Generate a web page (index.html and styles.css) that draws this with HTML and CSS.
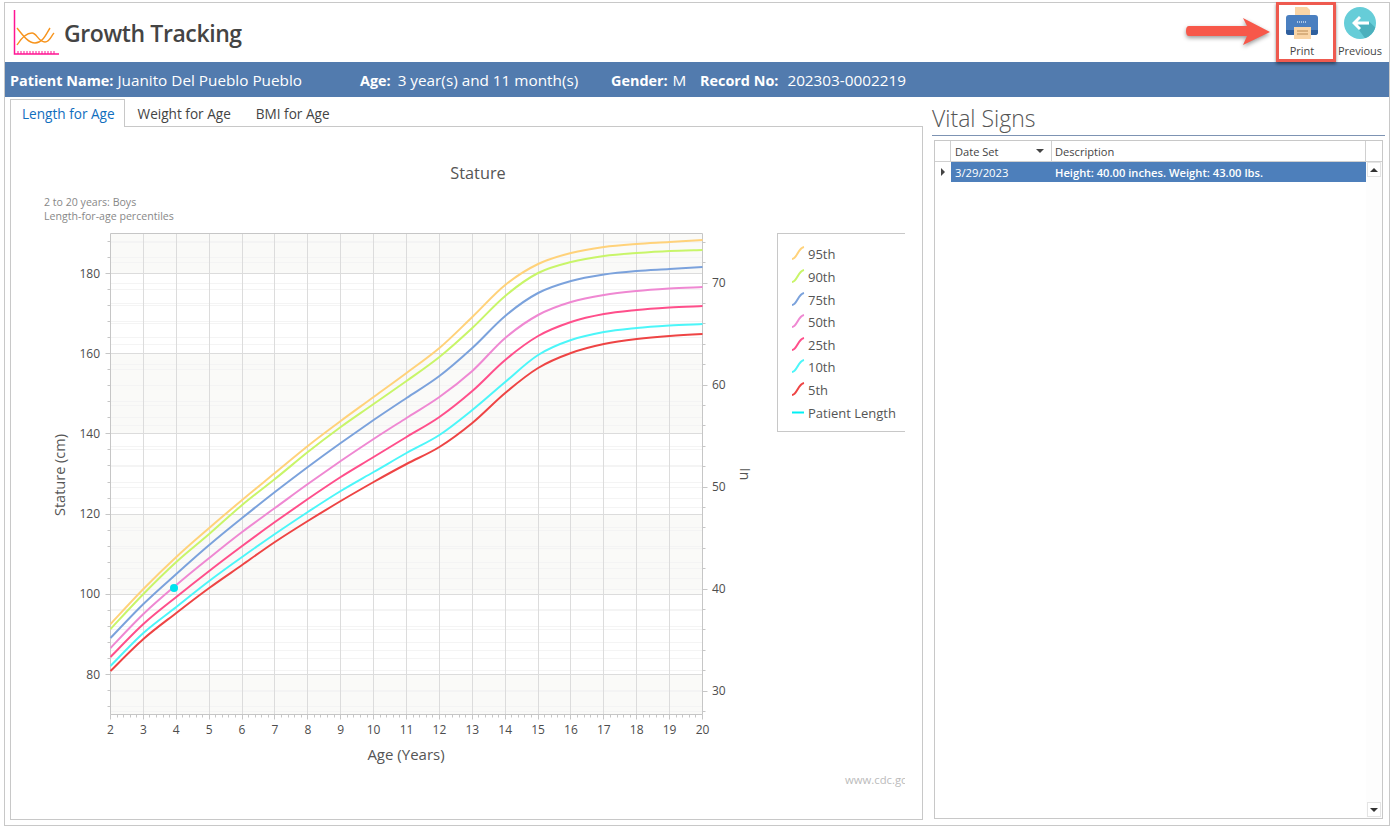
FILE: index.html
```html
<!DOCTYPE html>
<html lang="en">
<head>
<meta charset="utf-8">
<title>Growth Tracking</title>
<link rel="stylesheet" href="styles.css">
</head>
<body>
<div class="window">
  <header class="header">
    <svg class="logo" width="46" height="46" viewBox="13 10 46 46">
      <path class="logo-axis" d="M14.5 10V54H59"/>
      <path class="logo-ticks" d="M18 51v3M21 51v3M24 51v3M27 51v3M30 51v3M33 51v3M36 51v3M39 51v3M42 51v3M45 51v3M48 51v3M51 51v3M54 51v3"/>
      <path class="logo-curve" d="M17 28C24 37 29 43 35 43C43 43 46 34 50 28"/>
      <path class="logo-curve" d="M17 45C22 37 27 33 32 33C37 33 38 42 45 42C50 42 51 36 54 33"/>
    </svg>
    <h1 class="title">Growth Tracking</h1>
    <div class="actions">
      <button class="action action-print">
        <svg width="36" height="36" viewBox="1284 6 36 36">
          <path class="paper" d="M1295 7h12l3 3v9h-15z"/>
          <path class="printer" d="M1289 15h26q3 0 3 3v14q0 3-3 3h-26q-3 0-3-3V18q0-3 3-3z"/>
          <path class="printer-dark" d="M1286 30h32v2q0 3-3 3h-26q-3 0-3-3z"/>
          <path class="paper" d="M1294 27h17v12h-17z"/>
          <path class="paper-line" d="M1297 31h11M1297 34h11"/>
          <path class="printer-dots" d="M1297 22h10"/>
        </svg>
        <span>Print</span>
      </button>
      <button class="action action-prev">
        <svg width="34" height="34" viewBox="0 0 34 34">
          <circle class="prev-disc" cx="17" cy="17" r="16"/>
          <path class="prev-shadow" d="M16 24L18 22L14.500 18.500H26V15.500L32.300 21.500A16 16 0 0 1 22 32.200Z"/>
          <path class="prev-arrow" d="M9 17l7-7 2 2-3.500 3.500H26v3H14.500L18 22l-2 2z"/>
        </svg>
        <span>Previous</span>
      </button>
    </div>
    <div class="callout-box"></div>
    <svg class="callout-arrow" width="90" height="36" viewBox="0 0 90 36">
      <path d="M3 11H61L57 3L84 17L57 30L61 21H3Q0 21 0 16T3 11z"/>
    </svg>
  </header>

  <div class="patient-bar">
    <span class="field field-name"><b>Patient Name:</b> Juanito Del Pueblo Pueblo</span>
    <span class="field field-age"><b>Age:</b> 3 year(s) and 11 month(s)</span>
    <span class="field field-gender"><b>Gender:</b> M</span>
    <span class="field field-record"><b>Record No:</b> 202303-0002219</span>
  </div>

  <main class="content">
    <section class="chart-col">
      <nav class="tabs">
        <a class="tab tab-active">Length for Age</a>
        <a class="tab">Weight for Age</a>
        <a class="tab">BMI for Age</a>
      </nav>
      <div class="tab-panel">
        <svg id="chart" class="chart" width="894" height="692" viewBox="11 127 894 692">
          <g id="plot"></g>
          <text class="chart-title" x="478" y="178.500">Stature</text>
          <text class="chart-sub" x="44" y="206">2 to 20 years: Boys</text>
          <text class="chart-sub" x="44" y="220">Length-for-age percentiles</text>
          <text class="axis-title axis-title-age" x="406" y="760">Age (Years)</text>
          <text class="axis-title" transform="translate(65 475) rotate(-90)">Stature (cm)</text>
          <text class="axis-title-small" transform="translate(740 474) rotate(90)">In</text>
          <text class="watermark" x="845" y="784">www.cdc.gc</text>
          <g id="legend"></g>
        </svg>
      </div>
    </section>

    <aside class="vitals">
      <h2 class="vitals-title">Vital Signs</h2>
      <div class="grid">
        <div class="grid-head">
          <div class="cell cell-corner"></div>
          <div class="cell cell-date">Date Set<i class="sort"></i></div>
          <div class="cell cell-desc">Description</div>
          <div class="cell cell-end"></div>
        </div>
        <div class="grid-body">
          <div class="rows">
            <div class="row">
              <div class="row-marker"><i class="marker"></i></div>
              <div class="row-cell row-date">3/29/2023</div>
              <div class="row-cell row-desc">Height: 40.00 inches. Weight: 43.00 lbs.</div>
            </div>
          </div>
          <div class="scrollbar">
            <div class="scroll-btn"><i class="tri-up"></i></div>
            <div class="scroll-btn"><i class="tri-down"></i></div>
          </div>
        </div>
      </div>
    </aside>
  </main>
</div>
<script src="chart.js"></script>
</body>
</html>
```

FILE: styles.css
```css
* { box-sizing: border-box; }
html, body { margin: 0; padding: 0; background: #fff; }
body { font-family: "Open Sans", "Noto Sans", sans-serif; color: #444; overflow: hidden; }

.window {
  width: 1386px; height: 824px; margin: 2px 0 0 4px;
  border: 1px solid #c8c8c8; display: flex; flex-direction: column;
}

.header { position: relative; height: 59px; display: flex; align-items: center; flex: none; }
.logo { margin: 1px 0 0 8px; flex: none; }
.logo-axis { fill: none; stroke: #ff1493; stroke-width: 1.500; }
.logo-ticks { fill: none; stroke: #ff1493; stroke-width: 1; }
.logo-curve { fill: none; stroke: #f7941d; stroke-width: 1.400; }
.title { margin: 0 0 0 5px; font-size: 23px; letter-spacing: -0.4px; font-weight: 600; color: #444; line-height: 59px; position: relative; top: 1px; }

.actions { margin-left: auto; display: flex; align-items: flex-start; height: 100%; }
.action {
  border: 0; background: none; padding: 0; margin: 0; font: inherit; font-size: 11px; color: #444;
  display: flex; flex-direction: column; align-items: center; width: 58px;
}
.action span { line-height: 14px; }
.action-print { padding-top: 3px; }
.action-print span { margin-top: 2px; }
.action-prev { padding-top: 3px; }
.action-prev span { margin-top: 4px; }
.paper { fill: #f9d5a7; }
.paper-line { stroke: #b98a55; stroke-width: 1; fill: none; }
.printer { fill: #4a7fc0; }
.printer-dark { fill: #2f5f9e; }
.printer-dots { stroke: #cfe0f2; stroke-width: 1.500; stroke-dasharray: 1 1; fill: none; }
.prev-disc { fill: #66cdd8; }
.prev-shadow { fill: #4bb0bd; }
.prev-arrow { fill: #fff; }

.callout-box {
  position: absolute; left: 1271px; top: -1px; width: 60px; height: 60px;
  border: 3px solid #ee5a4f; box-shadow: 0 2px 3px rgba(0,0,0,.45);
}
.callout-arrow { position: absolute; left: 1181px; top: 12px; filter: drop-shadow(0 2px 2px rgba(0,0,0,.4)); }
.callout-arrow path { fill: #f7584a; }

.patient-bar {
  flex: none; height: 35px; background: #527bae; color: #fff;
  display: flex; align-items: center; font-size: 15.300px; padding: 1px 0 0 5px; white-space: nowrap;
}
.patient-bar b { font-weight: 700; font-size: 14.400px; }
.field-name { width: 350px; }
.field-age { width: 251px; }
.field-age b { margin-right: 3px; }
.field-gender { width: 89px; }
.field-gender b { margin-right: 1px; }
.field-record b { margin-right: 5px; }

.content { flex: 1; display: flex; min-height: 0; padding: 2px 0 0 5px; }
.chart-col { width: 913px; flex: none; display: flex; flex-direction: column; }
.tabs { display: flex; height: 27px; flex: none; position: relative; z-index: 1; font-size: 13.600px; }
.tab { height: 28px; line-height: 28px; padding: 0 12px; border: 1px solid transparent; border-bottom: 0; color: #444; white-space: nowrap; }
.tab + .tab + .tab { margin-left: -1px; }
.tab-active { color: #106ebe; border-color: #c8c8c8; background: #fff; padding: 0 9px 0 11px; }
.tab-panel { height: 694px; border: 1px solid #c8c8c8; flex: none; }
.chart { display: block; }

.chart-title { font-size: 16.300px; fill: #555; text-anchor: middle; }
.chart-sub { font-size: 10.600px; fill: #888; }
.axis-title { font-size: 14.500px; fill: #555; text-anchor: middle; }
.axis-title-age { font-size: 15px; }
.axis-title-small { font-size: 14px; fill: #555; text-anchor: middle; }
.watermark { font-size: 11.300px; fill: #bbb; }
.tick-label { font-size: 12px; fill: #4d4d4d; }
.legend-box { fill: #fff; stroke: #c8c8c8; }
.legend-label { font-size: 13px; fill: #555; }

.vitals { width: 453px; margin-left: 9px; flex: none; display: flex; flex-direction: column; }
.vitals-title {
  margin: 0; height: 37px; border-bottom: 1px solid #7d93b3; font-size: 23px; font-weight: 300; color: #555;
  line-height: 39px; white-space: nowrap; flex: none;
}
.grid { margin: 4px 0 0 2px; width: 449px; height: 679px; border: 1px solid #c8c8c8; display: flex; flex-direction: column; flex: none; }
.grid-head { display: flex; height: 21px; flex: none; font-size: 11.100px; border-bottom: 1px solid #d0d0d0; }
.cell { border-right: 1px solid #d0d0d0; line-height: 21px; color: #444; position: relative; white-space: nowrap; }
.cell-corner { width: 16px; }
.cell-date { width: 101px; padding-left: 4px; }
.cell-desc { width: 314px; padding-left: 3px; }
.cell-end { flex: 1; border-right: 0; }
.sort {
  position: absolute; right: 7px; top: 8px; border-left: 4px solid transparent; border-right: 4px solid transparent;
  border-top: 4px solid #444;
}
.grid-body { flex: 1; display: flex; min-height: 0; }
.rows { width: 431px; flex: none; }
.row { display: flex; height: 20px; }
.row-marker { width: 16px; flex: none; display: flex; align-items: center; justify-content: center; }
.marker { border-top: 4px solid transparent; border-bottom: 4px solid transparent; border-left: 4px solid #444; }
.row-cell { background: #4d7fbb; color: #fff; font-size: 11.200px; line-height: 21px; padding-left: 4px; white-space: nowrap; font-weight: 600; }
.row-date { width: 100px; font-weight: 400; font-size: 11.300px; }
.row-desc { width: 315px; }
.scrollbar { flex: 1; background: #fdfdfd; display: flex; flex-direction: column; justify-content: space-between; padding: 0 1px 1px 1px; }
.scroll-btn { height: 15px; background: #fff; border: 1px solid #e4e4e4; display: flex; align-items: center; justify-content: center; }
.tri-up { border-left: 4px solid transparent; border-right: 4px solid transparent; border-bottom: 4px solid #333; }
.tri-down { border-left: 4px solid transparent; border-right: 4px solid transparent; border-top: 4px solid #333; }

.band { fill: #fafaf8; }
.grid-major { stroke: #dcdcdc; stroke-width: 1; }
.grid-minor { stroke: #f4f4f4; stroke-width: 1; }
.axis-line { stroke: #c6c6c6; stroke-width: 1; fill: none; }
.curve { fill: none; stroke-width: 2; stroke-linejoin: round; }
.patient-dot { fill: #00e3ee; }
.legend-key { fill: none; stroke-width: 2; }
```

FILE: chart.js
```js
(function () {
  var NS = 'http://www.w3.org/2000/svg';
  var plot = document.getElementById('plot');
  var legend = document.getElementById('legend');

  function el(parent, name, attrs, text) {
    var e = document.createElementNS(NS, name);
    for (var k in attrs) e.setAttribute(k, attrs[k]);
    if (text !== undefined) e.textContent = text;
    parent.appendChild(e);
    return e;
  }
  function line(parent, cls, x1, y1, x2, y2) {
    el(parent, 'line', { 'class': cls, x1: x1, y1: y1, x2: x2, y2: y2 });
  }

  var L = 110.5, R = 702.5, T = 233.5, B = 714.5;
  function xAge(a) { return 110.5 + (a - 2) * 32.89; }
  function yCm(c) { return 273.5 + (180 - c) * 4.01; }
  function yIn(i) { return 283 + (70 - i) * 10.2; }
  function snap(v) { return Math.round(v - 0.5) + 0.5; }

  // alternating bands every 20 cm, from the top of the plot downwards
  [[T, snap(yCm(180))], [snap(yCm(160)), snap(yCm(140))], [snap(yCm(120)), snap(yCm(100))], [snap(yCm(80)), B]]
    .forEach(function (b) {
      el(plot, 'rect', { 'class': 'band', x: L, y: b[0], width: R - L, height: b[1] - b[0] });
    });

  // faint lines: 4 cm on the left scale, 2 in on the right scale
  var c, i, a;
  for (c = 72; c <= 188; c += 4) {
    if (c % 20 !== 0) line(plot, 'grid-minor', L, snap(yCm(c)), R, snap(yCm(c)));
  }
  for (i = 28; i <= 74; i += 2) {
    line(plot, 'grid-minor', L, snap(yIn(i)), R, snap(yIn(i)));
  }
  for (a = 3; a < 20; a++) line(plot, 'grid-major', snap(xAge(a)), T, snap(xAge(a)), B);
  for (c = 80; c <= 180; c += 20) line(plot, 'grid-major', L, snap(yCm(c)), R, snap(yCm(c)));

  // axes
  el(plot, 'path', { 'class': 'axis-line', d: 'M' + L + ' ' + T + 'H' + R + 'V' + B + 'H' + L + 'Z' });
  for (c = 72; c <= 188; c += 4) {
    var major = c % 20 === 0;
    line(plot, 'axis-line', major ? L - 5 : L - 3, snap(yCm(c)), L, snap(yCm(c)));
  }
  for (i = 28; i <= 74; i += 2) {
    var majorIn = i % 10 === 0;
    line(plot, 'axis-line', R, snap(yIn(i)), R + (majorIn ? 5 : 3), snap(yIn(i)));
  }
  for (a = 2; a <= 20.01; a += 0.2) {
    var whole = Math.abs(a - Math.round(a)) < 0.01;
    line(plot, 'axis-line', snap(xAge(a)), B, snap(xAge(a)), B + (whole ? 5 : 3));
  }

  // labels
  for (a = 2; a <= 20; a++) {
    el(plot, 'text', { 'class': 'tick-label', x: xAge(a), y: 734, 'text-anchor': 'middle' }, String(a));
  }
  for (c = 80; c <= 180; c += 20) {
    el(plot, 'text', { 'class': 'tick-label', x: 100, y: yCm(c) + 4, 'text-anchor': 'end' }, String(c));
  }
  for (i = 30; i <= 70; i += 10) {
    el(plot, 'text', { 'class': 'tick-label', x: 712, y: yIn(i) + 4 }, String(i));
  }

  // percentile curves: pixel y at ages 2, 3, ... 20
  var series = [
    ['95th', '#ffd27a', [624,589,557,528,500,473,446,421,397,373,348,317,285,264,253,247,244,242,240]],
    ['90th', '#c8f569', [629,594,562,534,505,479,452,427,404,381,357,328,296,273,262,256,253,251,250]],
    ['75th', '#7ba2dc', [638,604,574,545,518,492,467,443,420,398,376,348,316,293,281,274.5,271,269,267]],
    ['50th', '#ef88d2', [648,614,585,558,532,508,484,461,439,418,397,371,338,315,302,295,291,288.5,287]],
    ['25th', '#ff4f8b', [657,624,597,571,546,522,499,477,457,437,417,391,360,336,322,314,310,307.5,306]],
    ['10th', '#4cf6f9', [666,633,607,581,557,534,512,491,472,453,435,410,382,355,340,332,328,325.5,324]],
    ['5th',  '#ee4444', [671,639,613,588,565,542,521,501,482,464,447,423,393,368,353,344,339,336,334]]
  ];
  function smooth(ys) {
    var pts = ys.map(function (y, n) { return [xAge(n + 2), y]; });
    var d = 'M' + pts[0][0] + ' ' + pts[0][1];
    for (var n = 0; n < pts.length - 1; n++) {
      var p0 = pts[Math.max(n - 1, 0)], p1 = pts[n], p2 = pts[n + 1], p3 = pts[Math.min(n + 2, pts.length - 1)];
      d += 'C' + (p1[0] + (p2[0] - p0[0]) / 6).toFixed(1) + ' ' + (p1[1] + (p2[1] - p0[1]) / 6).toFixed(1) + ' ' +
        (p2[0] - (p3[0] - p1[0]) / 6).toFixed(1) + ' ' + (p2[1] - (p3[1] - p1[1]) / 6).toFixed(1) + ' ' +
        p2[0].toFixed(1) + ' ' + p2[1];
    }
    return d;
  }
  series.forEach(function (s) {
    el(plot, 'path', { 'class': 'curve', stroke: s[1], d: smooth(s[2]) });
  });
  el(plot, 'circle', { 'class': 'patient-dot', cx: 174, cy: 588, r: 4 });

  // legend (its right side runs past the edge of the chart)
  el(legend, 'rect', { 'class': 'legend-box', x: 777.5, y: 233.5, width: 140, height: 198 });
  var rowY = [254, 277, 300, 322, 345, 367, 390];
  series.forEach(function (s, n) {
    var y = rowY[n];
    el(legend, 'path', { 'class': 'legend-key', stroke: s[1], d: 'M792 ' + (y + 5) + 'C797 ' + (y + 5) + ' 798 ' + (y - 6) + ' 804 ' + (y - 7) });
    el(legend, 'text', { 'class': 'legend-label', x: 808, y: y + 4.5 }, s[0]);
  });
  line(legend, 'legend-key', 792, 412.5, 804, 412.5);
  legend.lastChild.setAttribute('stroke', '#00f0f5');
  el(legend, 'text', { 'class': 'legend-label', x: 808, y: 417.5 }, 'Patient Length');
})();
```
